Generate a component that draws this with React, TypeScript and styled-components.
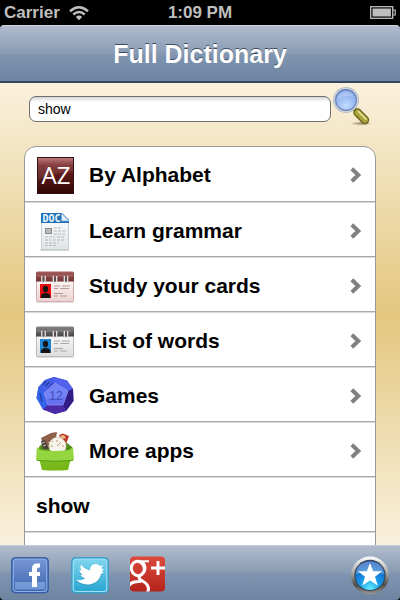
import React, { useState } from "react";
import styled, { createGlobalStyle } from "styled-components";

const GlobalStyle = createGlobalStyle`
  * { box-sizing: border-box; }
  body {
    margin: 0;
    background: #000;
    font-family: "Liberation Sans", Arial, sans-serif;
  }
`;

const Page = styled.div`
  display: flex;
  flex-direction: column;
  height: 100vh;
  overflow: hidden;
`;

const StatusBar = styled.div`
  display: grid;
  grid-template-columns: 1fr auto 1fr;
  align-items: center;
  flex: none;
  height: 25px;
  padding: 0 4px;
  color: #bfbfbf;
  font-size: 17px;
  font-weight: bold;
  line-height: 24px;
`;

const StatusGroup = styled.div<{ $end?: boolean }>`
  display: flex;
  align-items: center;
  justify-content: ${(p) => (p.$end ? "flex-end" : "flex-start")};
  gap: 9px;
`;

const Header = styled.header`
  display: flex;
  align-items: center;
  justify-content: center;
  flex: none;
  height: 58px;
  border-top: 1px solid #cdd5df;
  border-bottom: 2px solid #35475f;
  border-radius: 4px 4px 0 0;
  background: linear-gradient(#b0bccd, #889bb3 50%, #8095b0 50%, #6d84a2);
`;

const Title = styled.h1`
  margin: 0;
  color: #fff;
  font-size: 25px;
  line-height: 30px;
  text-shadow: 0 -1px 0 #3c4a5d;
`;

const Main = styled.main`
  flex: 1;
  min-height: 0;
  overflow: hidden;
  background: linear-gradient(#faf1de, #e3c77f 50%, #faf1de);
`;

const SearchForm = styled.form`
  display: flex;
  align-items: flex-end;
  gap: 1px;
  padding: 3px 28px 0 29px;
`;

const SearchInput = styled.input`
  flex: 1;
  min-width: 0;
  height: 26px;
  margin: 0 0 4px;
  padding: 0 8px;
  border: 1px solid #6f6f6f;
  border-radius: 7px;
  outline: none;
  background: linear-gradient(#d6d6d6, #fff 5px);
  color: #000;
  font: 14px/20px "Liberation Sans", Arial, sans-serif;
`;

const IconButton = styled.button`
  display: block;
  padding: 0;
  border: 0;
  background: none;
  cursor: pointer;
`;

const Menu = styled.ul`
  margin: 20px 24px 0;
  padding: 0;
  overflow: hidden;
  list-style: none;
  border: 1px solid #999;
  border-radius: 12px;
  background: #fff;
`;

const MenuItem = styled.li`
  height: 55px;
  border-bottom: 1px solid #a9a9a9;

  & + & {
    border-top: 1px solid #d9d9d9;
  }
`;

const MenuLink = styled.a`
  display: flex;
  align-items: center;
  gap: 15px;
  height: 100%;
  padding: 2px 13px 0 11px;
  color: #000;
  font-size: 21px;
  font-weight: bold;
  line-height: 26px;
  text-decoration: none;
`;

const Label = styled.span`
  flex: 1;
`;

const Footer = styled.footer`
  display: flex;
  align-items: center;
  gap: 20px;
  flex: none;
  height: 55px;
  padding: 4px 10px 0;
  border-top: 1px solid #c2cad6;
  border-radius: 0 0 4px 4px;
  background: linear-gradient(#b0bccd, #889bb3 50%, #8095b0 50%, #6d84a2);
`;

const IconLink = styled.a<{ $last?: boolean }>`
  display: block;
  height: 40px;
  margin-left: ${(p) => (p.$last ? "auto" : "0")};
`;

const Drawing = styled.svg`
  display: block;
  flex: none;
  font-weight: normal;
`;

const Wifi = () => (
  <Drawing width="20" height="16" viewBox="0 0 20 16" fill="none" stroke="#bfbfbf" strokeWidth="2.5">
    <path d="M1 6.2Q10-1.8 19 6.2M4.3 9.5Q10 4.5 15.7 9.5" />
    <path d="M6.8 11.9Q10 9.3 13.2 11.9L10 15.2Z" fill="#bfbfbf" stroke="none" />
  </Drawing>
);

const Battery = () => (
  <Drawing width="26" height="13" viewBox="0 0 26 13">
    <rect x=".7" y=".7" width="22" height="11.6" fill="none" stroke="#bfbfbf" strokeWidth="1.3" />
    <rect x="2.5" y="2.5" width="18.4" height="8" fill="#bfbfbf" />
    <path d="M23 4H25.2V9H23" fill="none" stroke="#bfbfbf" strokeWidth="1.2" />
  </Drawing>
);

const Magnifier = () => (
  <Drawing width="40" height="40" viewBox="0 0 40 40">
    <defs>
      <radialGradient id="lens" cx=".5" cy=".75" r=".8">
        <stop offset="0" stopColor="#c3dbff" />
        <stop offset=".6" stopColor="#94b3ee" />
        <stop offset="1" stopColor="#7394da" />
      </radialGradient>
      <radialGradient id="shade">
        <stop offset="0" stopColor="#6b5d3a" stopOpacity=".7" />
        <stop offset="1" stopColor="#6b5d3a" stopOpacity="0" />
      </radialGradient>
    </defs>
    <ellipse cx="29" cy="37.5" rx="11" ry="2.3" fill="url(#shade)" />
    <path d="M22 22.5L26 26.5" stroke="#8d9095" strokeWidth="4" />
    <path d="M25.5 26.5L33 34" stroke="#655f19" strokeWidth="8.4" strokeLinecap="round" />
    <path d="M25.5 26.5L33 34" stroke="#a9a13b" strokeWidth="6" strokeLinecap="round" />
    <path d="M26.5 25.5L34 33" stroke="#dfd98b" strokeWidth="2" strokeLinecap="round" />
    <circle cx="14" cy="14" r="12.8" fill="#8f99a9" />
    <circle cx="14" cy="14" r="11.6" fill="url(#lens)" stroke="#ced3da" strokeWidth="1.8" />
    <circle cx="14" cy="14" r="10.4" fill="none" stroke="#6a83b5" strokeWidth="1.1" />
    <path d="M6 13Q6 6 13.5 5.5Q20.5 5.5 21.5 11Q14 8.5 6 13Z" fill="#fff" opacity=".23" />
  </Drawing>
);

const Alphabet = () => (
  <Drawing width="38" height="40" viewBox="0 0 38 40">
    <defs>
      <linearGradient id="maroon" x1="0" y1="0" x2="0" y2="1">
        <stop offset="0" stopColor="#b76c6c" />
        <stop offset=".22" stopColor="#782727" />
        <stop offset=".55" stopColor="#571616" />
        <stop offset="1" stopColor="#300505" />
      </linearGradient>
    </defs>
    <rect x="1.5" y="2.5" width="36" height="36" fill="url(#maroon)" stroke="#301010" />
    <path d="M2 3H37V16Q19 18 2 25Z" fill="#fff" opacity=".1" />
    <text x="20" y="29" textAnchor="middle" fill="#fff" fontFamily="Open Sans, sans-serif" fontSize="24">AZ</text>
  </Drawing>
);

const Document = () => (
  <Drawing width="38" height="40" viewBox="0 0 38 40">
    <defs>
      <linearGradient id="paper" x1="0" y1="0" x2="0" y2="1">
        <stop offset="0" stopColor="#fff" />
        <stop offset="1" stopColor="#dfe4e7" />
      </linearGradient>
    </defs>
    <rect x="4" y="38" width="29" height="2" rx="1" fill="#aaa" opacity=".5" />
    <path d="M5.5 2.5H26L32.5 9.5V38.5H5.5Z" fill="url(#paper)" stroke="#c5ced2" />
    <path d="M5 2H26L33 9V12H5Z" fill="#2372ba" />
    <path d="M25.5 2V10H33Z" fill="#e5f0fa" stroke="#6da5d6" strokeWidth=".7" />
    <text x="15.5" y="10.6" textAnchor="middle" fill="#eaf7ff" fontFamily="DejaVu Sans Mono, monospace" fontSize="10" fontWeight="bold">DOC</text>
    <rect x="9.5" y="17.5" width="6" height="5" fill="#bbb" stroke="#888" />
    <path d="M18 17H25M18 20H29M18 23H29M9 26H19M21 26H29M9 29H15M17 29H28M9 32H22M9 34.5H20" fill="none" stroke="#b6b9bb" strokeWidth="1" strokeDasharray="3 1" />
  </Drawing>
);

interface CardColors { dark: string; top: string; paper: string; edge: string; photo: string; line: string; id: string }

const CardCalendar = ({ dark, top, paper, edge, photo, line, id }: CardColors) => (
  <Drawing width="38" height="40" viewBox="0 -1 38 40">
    <defs>
      <linearGradient id={`${id}top`} x1="0" y1="0" x2="0" y2="1">
        <stop offset="0" stopColor={top} />
        <stop offset="1" stopColor={dark} />
      </linearGradient>
      <linearGradient id={`${id}paper`} x1="0" y1="0" x2="0" y2="1">
        <stop offset="0" stopColor="#fff" />
        <stop offset="1" stopColor={paper} />
      </linearGradient>
    </defs>
    <rect x="0" y="33" width="38" height="3" rx="1" fill="#999" opacity=".3" />
    <rect x=".5" y="8" width="37" height="26.5" rx="1" fill={`url(#${id}paper)`} stroke={edge} />
    <path d="M0 6Q0 4.5 1.5 4.5H36.5Q38 4.5 38 6V14.5H0Z" fill={`url(#${id}top)`} />
    <path d="M1 8.8H37" stroke="#fff" opacity=".22" />
    {[7.5, 19, 30].map((x) => (
      <g key={x}>
        <circle cx={x} cy="12.8" r="2.6" fill="#5a4b4b" />
        <path d={`M${x - 1.7} 9V14Q${x} 17 ${x + 1.7} 14V9`} fill="none" stroke="#eee" strokeWidth="1.2" />
      </g>
    ))}
    <rect x="4" y="17" width="11" height="14" fill={photo} />
    <ellipse cx="9.5" cy="22" rx="2.6" ry="3.2" fill="#151515" />
    <path d="M5 31V28.5Q5.3 26.5 8.5 26H10.5Q14 26.5 14.3 29V31Z" fill="#151515" />
    <path d="M18 19H24M26 19H34M18 21.5H22M24 21.5H33M18 26.5H27M18 29H22M24 29H31" stroke={line} strokeWidth="1.2" />
  </Drawing>
);

const Dice = () => (
  <Drawing width="38" height="40" viewBox="0 0 38 40">
    <path d="M18 1L31 4.5L37 13L37.5 25L30 35L19 38L7 33.5L.5 22L2.5 11L9 4Z" fill="#3e46c5" />
    <path d="M18 1L31 4.5L37 13L32 15L19 8L16 6.5Z" fill="#5361ed" />
    <path d="M18 1L16 6.5L8 17L2.5 11L9 4Z" fill="#4260e5" />
    <path d="M2.5 11L8 17L12 29L7 33.5L.5 22Z" fill="#3464e9" />
    <path d="M37 13L32 15L27 29L30 35L37.5 25Z" fill="#321b84" />
    <path d="M12 29H27L30 35L19 38L7 33.5Z" fill="#4b29a7" />
    <path d="M19 7L32 15L27 29H12L8 17Z" fill="#6571ee" stroke="#8c94f5" strokeWidth=".7" />
    <path d="M19 7L32 15L30 21L10 23L8 17Z" fill="#90a4ff" opacity=".35" />
    <text x="20" y="24" textAnchor="middle" fill="#424ebb" fontFamily="Liberation Sans, sans-serif" fontSize="12">12</text>
    <path d="M7 9L10 5M10 10L13 6M4 17L6 26" stroke="#273ca5" strokeWidth="1.3" />
  </Drawing>
);

const Basket = () => (
  <Drawing width="38" height="40" viewBox="0 0 38 40">
    <defs>
      <linearGradient id="green" x1="0" y1="0" x2="0" y2="1">
        <stop offset="0" stopColor="#7dbd20" />
        <stop offset="1" stopColor="#76b516" />
      </linearGradient>
    </defs>
    <path d="M3 16L7 12H31L36 16V21H3Z" fill="#518c16" />
    <path d="M5 7L15 2L21 1L20 7L12 12L18 17H9Z" fill="#8f6047" />
    <path d="M5 10L9 9L13 18H7Z" fill="#49423f" />
    <path d="M6 12L9 11M7 15L10 14" stroke="#c9bea7" strokeWidth="1" />
    <path d="M23 4L27 2.5L33 5L30 13L25 9Z" fill="#b73a20" />
    <path d="M24 5L28 4L30 7L26 8Z" fill="#edb88f" />
    <circle cx="21.5" cy="15" r="8.5" fill="#f6f5ed" stroke="#ddd4c2" />
    <path d="M21 15L25 11M16 10L17 11M15 15H17M21 9V11M26 15H28" stroke="#c9926a" strokeWidth="1" />
    <path d="M3 27H35L32 39Q19 40 6 39Z" fill="url(#green)" />
    <path d="M1 16L5 19Q19 21 33 19L37 16L38 29Q19 31 0 29Z" fill="#94d640" />
    <path d="M1 29.5Q20 31 37 29.5" fill="none" stroke="#599c13" />
  </Drawing>
);

const Chevron = () => (
  <Drawing width="12" height="16" viewBox="0 0 12 16" fill="none" stroke="#808080" strokeWidth="4">
    <path d="M1.8 1.8L8.3 8L1.8 14.2" />
  </Drawing>
);

const Facebook = () => (
  <Drawing width="40" height="40" viewBox="0 0 40 40">
    <defs>
      <linearGradient id="fb" x1="0" y1="0" x2="0" y2="1">
        <stop offset="0" stopColor="#7896d6" />
        <stop offset="1" stopColor="#3e67b2" />
      </linearGradient>
    </defs>
    <rect x="1.5" y="2.5" width="37" height="35.5" rx="4" fill="#3058a5" stroke="#3e62a3" />
    <rect x="3.2" y="4" width="33.6" height="32.5" rx="3" fill="url(#fb)" stroke="#8eb1e5" strokeWidth="1.2" />
    <rect x="5" y="27" width="30" height="7.5" fill="#8bb1e5" opacity=".65" />
    <path d="M30 8.5H26.5Q22 8.5 22 14V17H19V21H22V32H27V21H30V17H27V14.5Q27 12.5 28.5 12.5H30Z" fill="#fff" />
  </Drawing>
);

const Twitter = () => (
  <Drawing width="40" height="40" viewBox="0 0 40 40">
    <defs>
      <linearGradient id="tw" x1="0" y1="0" x2="0" y2="1">
        <stop offset="0" stopColor="#81d6ee" />
        <stop offset="1" stopColor="#29a5d2" />
      </linearGradient>
    </defs>
    <rect x="1.5" y="2.5" width="37" height="35.5" rx="4" fill="#2ba1cc" stroke="#419fc3" />
    <rect x="3.2" y="4" width="33.6" height="32.5" rx="3" fill="url(#tw)" stroke="#a3e2f4" strokeWidth="1.2" />
    <path d="M11 10.5Q14 15 20 16.5Q20 10.5 25.5 10Q28.5 10 30 12L33.5 11.5L31.5 14L34 15.5L31.5 17L34 18.5L31 20Q29 29 19.5 30.5Q11 31 6 25.5Q11 27.5 15.5 24Q12 24 10.5 21L13 20.8Q9.5 19 9.5 16L11.5 16.5Q9.5 13.5 11 10.5Z" fill="#2488ac" opacity=".5" />
    <path d="M11 9.5Q14 14 20 15.5Q20 9.5 25.5 9Q28.5 9 30 11L33.5 10.5L31.5 13L34 15L31.5 16L34 17.5L31 19Q29 28 19.5 29.5Q11 30 6 24.5Q11 26.5 15.5 23Q12 23 10.5 20L13 19.8Q9.5 18 9.5 15L11.5 15.5Q9.5 12.5 11 9.5Z" fill="#fff" />
  </Drawing>
);

const GooglePlus = () => (
  <Drawing width="36" height="40" viewBox="0 0 36 40">
    <defs>
      <linearGradient id="gp" x1="0" y1="0" x2="0" y2="1">
        <stop offset="0" stopColor="#dc4a3a" />
        <stop offset="1" stopColor="#b3241b" />
      </linearGradient>
      <clipPath id="gpclip"><rect y="1.5" width="35" height="35" rx="4" /></clipPath>
    </defs>
    <rect y="1.5" width="35" height="35" rx="4" fill="url(#gp)" />
    <g clipPath="url(#gpclip)" fill="none" stroke="#fff">
      <ellipse cx="7.8" cy="13.5" rx="6.4" ry="7.2" strokeWidth="3" transform="rotate(-15 7.8 13.5)" />
      <path d="M7 6.3H19M13 7Q17.5 12 14 18" strokeWidth="2" />
      <path d="M10 20.5Q7.5 24 12.5 26Q18.5 29 18.5 34.5L17 39M11 26.5Q1 26-1 31" strokeWidth="3" />
      <path d="M28 6V20M21 13H35" strokeWidth="3" />
    </g>
  </Drawing>
);

const StarBadge = () => (
  <Drawing width="40" height="40" viewBox="0 0 40 40">
    <defs>
      <linearGradient id="ring" x1="0" y1="0" x2="0" y2="1">
        <stop offset="0" stopColor="#fff" />
        <stop offset=".45" stopColor="#a4a4a4" />
        <stop offset=".75" stopColor="#4f4d4b" />
        <stop offset="1" stopColor="#9b9b9b" />
      </linearGradient>
      <radialGradient id="orb" cx=".5" cy=".95" r=".9">
        <stop offset="0" stopColor="#63edff" />
        <stop offset=".4" stopColor="#189bea" />
        <stop offset="1" stopColor="#1153b6" />
      </radialGradient>
    </defs>
    <circle cx="20" cy="20.5" r="19" fill="url(#ring)" />
    <circle cx="20" cy="20.5" r="15.7" fill="#3c4654" />
    <circle cx="20" cy="20.5" r="14.6" fill="url(#orb)" />
    <path d="M6 19Q7 7 20 6.5Q33 7 34 19Q20 14 6 19Z" fill="#fff" opacity=".3" />
    <path d="M20 8L23.2 16.2H32L25 21.8L27.7 30.5L20 25.5L12.3 30.5L15 21.8L8 16.2H16.8Z" fill="#fff" />
  </Drawing>
);

const items = [
  { label: "By Alphabet", icon: <Alphabet /> },
  { label: "Learn grammar", icon: <Document /> },
  { label: "Study your cards", icon: <CardCalendar id="red" dark="#703030" top="#a55c5c" paper="#ecd1d1" edge="#d6adad" photo="#e80d12" line="#b79898" /> },
  { label: "List of words", icon: <CardCalendar id="gray" dark="#454545" top="#858585" paper="#ddd" edge="#bbb" photo="#2186d2" line="#a9a9a9" /> },
  { label: "Games", icon: <Dice /> },
  { label: "More apps", icon: <Basket /> },
];

export default function App() {
  const [query, setQuery] = useState("show");
  return (
    <Page>
      <GlobalStyle />
      <StatusBar>
        <StatusGroup><span>Carrier</span><Wifi /></StatusGroup>
        <span>1:09 PM</span>
        <StatusGroup $end><Battery /></StatusGroup>
      </StatusBar>
      <Header><Title>Full Dictionary</Title></Header>
      <Main>
        <SearchForm onSubmit={(e) => e.preventDefault()}>
          <SearchInput type="text" aria-label="Search word" value={query} onChange={(e) => setQuery(e.target.value)} />
          <IconButton type="submit" aria-label="Search"><Magnifier /></IconButton>
        </SearchForm>
        <Menu>
          {items.map(({ label, icon }) => (
            <MenuItem key={label}>
              <MenuLink href="#">{icon}<Label>{label}</Label><Chevron /></MenuLink>
            </MenuItem>
          ))}
          <MenuItem><MenuLink href="#"><Label>show</Label></MenuLink></MenuItem>
          <MenuItem />
        </Menu>
      </Main>
      <Footer>
        <IconLink href="#" aria-label="Facebook"><Facebook /></IconLink>
        <IconLink href="#" aria-label="Twitter"><Twitter /></IconLink>
        <IconLink href="#" aria-label="Google Plus"><GooglePlus /></IconLink>
        <IconLink href="#" aria-label="Favourites" $last><StarBadge /></IconLink>
      </Footer>
    </Page>
  );
}
